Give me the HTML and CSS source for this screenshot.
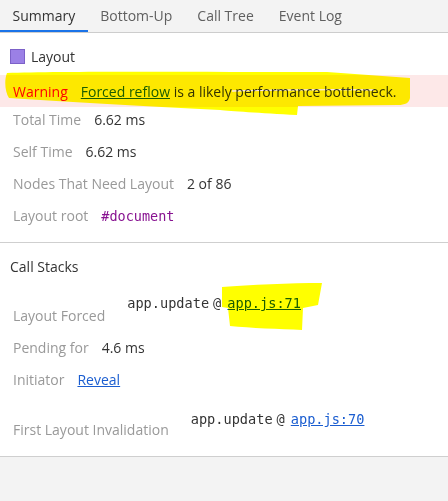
FILE: index.html
```html
<!DOCTYPE html>
<html>
<head>
<meta charset="utf-8">
<link rel="stylesheet" href="styles.css">
</head>
<body>
<div class="tabs">
  <div class="tab active">Summary</div>
  <div class="tab">Bottom-Up</div>
  <div class="tab">Call Tree</div>
  <div class="tab">Event Log</div>
</div>
<div class="panel">
  <div class="section">
    <div class="title"><span class="swatch"></span>Layout</div>
    <div class="warning"><span class="warn-label">Warning</span><span><a class="link">Forced reflow</a> is a likely performance bottleneck.</span></div>
    <div class="row"><span class="label">Total Time</span><span class="value">6.62 ms</span></div>
    <div class="row"><span class="label">Self Time</span><span class="value">6.62 ms</span></div>
    <div class="row"><span class="label">Nodes That Need Layout</span><span class="value">2 of 86</span></div>
    <div class="row"><span class="label">Layout root</span><span class="value node">#document</span></div>
  </div>
  <div class="section last">
    <div class="title tall">Call Stacks</div>
    <div class="row stackrow"><span class="label">Layout Forced</span><span class="stack">app.update<span class="at">@</span><a class="link">app.js:71</a></span></div>
    <div class="row"><span class="label">Pending for</span><span class="value">4.6 ms</span></div>
    <div class="row"><span class="label">Initiator</span><a class="link value">Reveal</a></div>
    <div class="row stackrow tight"><span class="label">First Layout Invalidation</span><span class="stack">app.update<span class="at">@</span><a class="link">app.js:70</a></span></div>
  </div>
</div>
<svg class="marker" width="448" height="501" viewBox="0 0 448 501">
  <path fill="#ffff00" d="M7,73 C60,71 200,72 327,72 L410,78 L410,98 C409,103 405,105 398,105 L298,106 L297,115 C260,113 230,111 220,110 Q100,104 9,98 C5,92 4,80 7,73 Z"/>
  <path fill="none" stroke="#ffffff" stroke-width="1.3" d="M232,91 C280,90 330,89 374,90"/>
  <path fill="#ffff00" d="M222,287 C250,285 290,283 322,283 L318,305 L303,308 L302,330 C280,329 250,328 230,326 L228,308 L222,307 Z"/>
</svg>
</body>
</html>
```

FILE: styles.css
```css
html, body {
  margin: 0;
  padding: 0;
}
body {
  position: relative;
  width: 448px;
  height: 501px;
  background: #f3f3f3;
  font-family: "Segoe UI", "Open Sans", "Noto Sans", sans-serif;
  font-size: 14px;
  color: #333;
  overflow: hidden;
}
.tabs {
  display: flex;
  height: 32px;
  border-bottom: 1px solid #cdcdcd;
  background: #f3f3f3;
}
.tab {
  padding: 0 12.5px;
  line-height: 31px;
  color: #5f5f5f;
  border-bottom: 2px solid transparent;
  height: 30px;
}
.tab.active {
  color: #333;
  border-bottom-color: #1a73e8;
}
.panel {
  background: #fff;
  border-bottom: 1px solid #cfcfcf;
}
.section {
  border-bottom: 1px solid #cfcfcf;
  padding-top: 8px;
  padding-bottom: 7px;
}
.section.last {
  border-bottom: none;
  padding-bottom: 7px;
}
.title {
  display: flex;
  align-items: center;
  height: 30px;
  padding-left: 10px;
  color: #333;
}
.title.tall {
  margin-bottom: 2px;
}
.swatch {
  width: 13px;
  height: 13px;
  background: #9b80e6;
  border: 1px solid #7c61c8;
  margin-right: 6px;
}
.warning {
  display: flex;
  gap: 13px;
  align-items: center;
  margin-top: 4px;
  height: 32px;
  padding-left: 13px;
  background: #fde8e8;
  color: #333;
}
.warn-label {
  color: #ff0000;
}
.row {
  display: flex;
  align-items: flex-end;
  gap: 13px;
  padding: 4px 0 10px 13px;
  line-height: 18px;
}
.label {
  color: #999;
}
.value {
  color: #333;
}
.node {
  font-family: "DejaVu Sans Mono", "Liberation Mono", monospace;
  font-size: 13.5px;
  color: #881391;
}
.link {
  color: #1a5dd0;
  text-decoration: underline;
  cursor: pointer;
}
.stackrow {
  padding-top: 11px;
  gap: 22px;
}
.stack {
  font-family: "DejaVu Sans Mono", "Liberation Mono", monospace;
  font-size: 13.6px;
  color: #333;
  margin-bottom: 13px;
}
.tight .stack {
  margin-bottom: 11px;
}
.at {
  margin: 0 6px 0 4px;
}
.marker {
  position: absolute;
  top: 0;
  left: 0;
  mix-blend-mode: multiply;
  pointer-events: none;
}
```
